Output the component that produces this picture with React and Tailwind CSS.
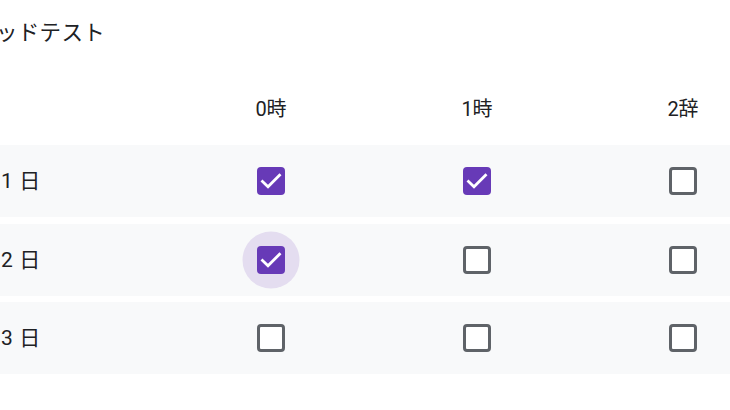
import { Fragment } from 'react';

const columns = ['0時', '1時', '2辞'];

const rows = [
    { label: '1 日', values: [true, true, false] },
    { label: '2 日', values: [true, false, false], focus: 0 },
    { label: '3 日', values: [false, false, false] },
];

const Checkbox = ({ checked, focused }) => (
    <div className="relative flex items-center justify-center w-[28px] h-[28px]">
        {focused && (
            <span className="absolute left-1/2 top-1/2 -translate-x-1/2 -translate-y-1/2 w-[57px] h-[57px] rounded-full bg-[#e4ddf0]" />
        )}
        {checked ? (
            <span className="relative flex items-center justify-center w-[28px] h-[28px] rounded-[4px] bg-[#673ab7]">
                <svg width="28" height="28" viewBox="0 0 28 28" fill="none">
                    <polyline
                        points="5.5,14.5 11,19.8 22.5,8.2"
                        stroke="#ffffff"
                        strokeWidth="2.8"
                        strokeLinecap="square"
                    />
                </svg>
            </span>
        ) : (
            <span className="relative w-[28px] h-[28px] rounded-[4px] border-[3px] border-[#5f6368] bg-white" />
        )}
    </div>
);

const GridRow = ({ row }) => (
    <div className="grid grid-cols-[168px_206px_206px_206px] h-[72px] items-center bg-[#f8f9fa]">
        <div className="pl-[1px] text-[21px] leading-[30px] tracking-[0.6px] text-[#202124]">{row.label}</div>
        {row.values.map((v, i) => (
            <div key={i} className="flex items-center justify-center">
                <Checkbox checked={v} focused={row.focus === i} />
            </div>
        ))}
    </div>
);

export default function App() {
    return (
        <div className="w-[730px] h-[410px] overflow-hidden bg-white font-['Roboto','Noto_Sans_CJK_JP',sans-serif] text-[#202124]">
            <div className="w-[786px]">
                {/* question title (cut off on the left) */}
                <div className="pt-[18px] -ml-[4px] text-[21.5px] leading-[30px] tracking-[0.3px]">ッドテスト</div>

                <div className="grid grid-cols-[168px_206px_206px_206px] h-[40px] mt-[41px] mb-[16px] items-center">
                    <div />
                    {columns.map((c) => (
                        <Fragment key={c}>
                            <div className="text-center text-[20px] leading-[30px]">{c}</div>
                        </Fragment>
                    ))}
                </div>

                <div className="flex flex-col gap-[6.5px]">
                    {rows.map((r) => (
                        <GridRow key={r.label} row={r} />
                    ))}
                </div>
            </div>
        </div>
    );
}
